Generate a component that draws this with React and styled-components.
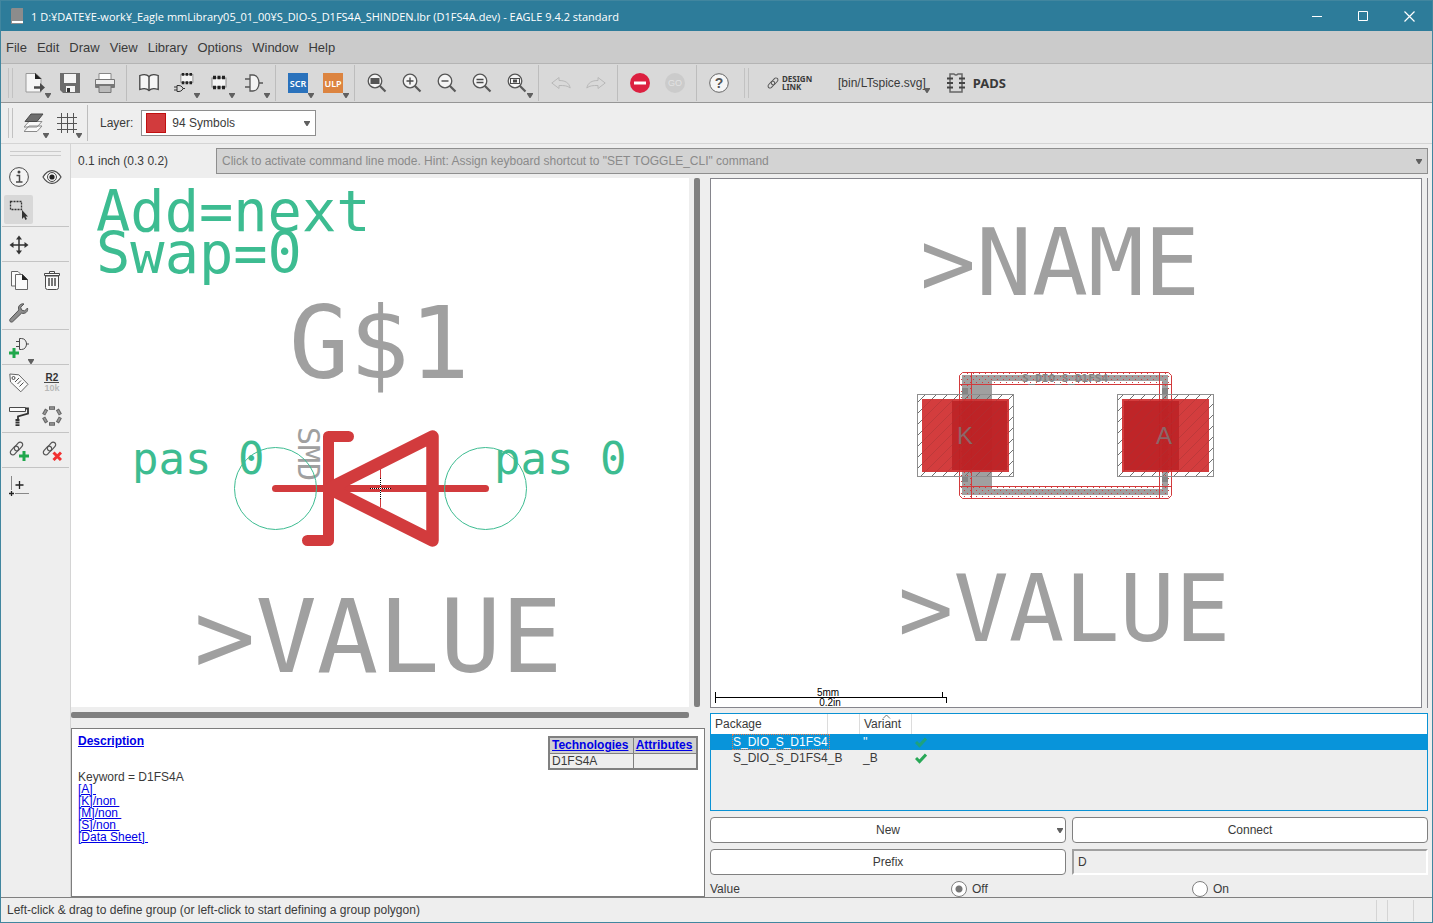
import { useState } from "react";
import styled, { createGlobalStyle } from "styled-components";

const uiFont = `"Liberation Sans", Arial, sans-serif`;
const lineFont = `"DejaVu Sans Mono", monospace`;

const Svg = ({ size = 20, w, children }) => (
  <svg
    width={w || size}
    height={size}
    viewBox={`0 0 ${w || size} ${size}`}
    fill="none"
    stroke="#4a4a4a"
    aria-hidden="true"
  >
    {children}
  </svg>
);

const Arrow = () => (
  <svg width="6" height="5" viewBox="0 0 6 5" aria-hidden="true">
    <path d="M0 0h6v1L3.500 5h-1L0 1z" fill="#606060" />
  </svg>
);

const Lens = ({ children }) => (
  <Svg>
    <path d="M12.5 12.5 18.500 18.500" stroke="#5a5a5a" strokeWidth="2.2" />
    <circle cx="8" cy="8" r="6.800" fill="#f4f4f4" stroke="#555" strokeWidth="1.300" />
    {children}
  </Svg>
);

const Chip = ({ x = 0, y = 0, s = 1 }) => (
  <g transform={`translate(${x} ${y}) scale(${s})`}>
    <rect x="1" y="3" width="14" height="9" fill="#f4f4f4" stroke="#888" />
    <path
      d="M2 2.500h3M6.500 2.500h3M11 2.500h3M2 12.500h3M6.500 12.500h3M11 12.500h3"
      stroke="#222"
      strokeWidth="3.500"
    />
  </g>
);

const Chain = () => (
  <g stroke="#555" strokeWidth="1.200">
    <rect x="-5" y="-2.500" width="10" height="5" rx="2.500" transform="translate(5.500 9.500) rotate(-48)" />
    <rect x="-5" y="-2.500" width="10" height="5" rx="2.500" transform="translate(9.500 5.500) rotate(-48)" />
  </g>
);

const icons = {
  open: (
    <Svg>
      <path d="M1 .5h10l5 5v13.500H1z" fill="#f6f6f6" stroke="#999" />
      <path d="M10 0v6h6.500z" fill="#222" stroke="none" />
      <path d="M9 14.500h8" strokeWidth="2.500" />
      <path d="M15 10v9l5-4.500z" fill="#4a4a4a" stroke="none" />
    </Svg>
  ),
  save: (
    <Svg>
      <path d="M0 0h20v20H3l-3-3z" fill="#6c6c6c" stroke="none" />
      <path d="M4 1h12v9H4zM6 13h9v6H6z" fill="#f4f4f4" stroke="none" />
      <path d="M7 15h3v4H7z" fill="#333" stroke="none" />
    </Svg>
  ),
  print: (
    <Svg>
      <path d="M4 .5h12v7H4z" fill="#fff" stroke="#888" />
      <path d="M.5 6.500h19v8H.5z" fill="#ececec" stroke="#777" />
      <path d="M1 11h18v4H1z" fill="#777" stroke="none" />
      <path d="M4 12.500h12v7H4z" fill="#bbb" stroke="#777" />
    </Svg>
  ),
  book: (
    <Svg>
      <path
        d="M10 3.500C8 1.500 4 1.500 .8 2.500v14c3.200-1 7.200-1 9.200 1 2-2 6-2 9.200-1v-14C16 1.500 12 1.500 10 3.500z"
        fill="#f6f6f6"
        stroke="#444"
        strokeWidth="1.300"
      />
      <path d="M10 3.500v14" strokeWidth="1.500" />
    </Svg>
  ),
  device: (
    <Svg>
      <Chip x={6} y={-1} s={0.86} />
      <path d="M3 12.500h2c3 0 4 3 4 3s-1 3-4 3H3zM0 14h3M0 17h3M9 15.500h2" stroke="#333" />
    </Svg>
  ),
  package: (
    <Svg>
      <Chip x={2} y={2} />
    </Svg>
  ),
  gate: (
    <Svg>
      <path d="M6 2h3c4 0 6 4 6 8s-2 8-6 8H6z" fill="#f4f4f4" stroke="#555" strokeWidth="1.300" />
      <path d="M1 6h5M1 14h5M15 10h4" stroke="#555" strokeWidth="1.500" />
    </Svg>
  ),
  fit: (
    <Lens>
      <rect x="3.500" y="5" width="9" height="6" fill="#555" stroke="none" />
    </Lens>
  ),
  zoomIn: (
    <Lens>
      <path d="M4.500 8h7M8 4.500v7" strokeWidth="1.400" />
    </Lens>
  ),
  zoomOut: (
    <Lens>
      <path d="M4.500 8h7" strokeWidth="1.400" />
    </Lens>
  ),
  redraw: (
    <Lens>
      <path d="M4.500 6.500h7M4.500 9.500h7" strokeWidth="1.400" />
    </Lens>
  ),
  select: (
    <Lens>
      <rect x="3.500" y="5.500" width="9" height="5" />
      <path d="M6 8h4" strokeWidth="3" />
    </Lens>
  ),
  undo: (
    <Svg>
      <path d="M.8 10 8 4.500v3c6 0 10 2 11.200 7.500-3-2.500-6-2.500-11.200-2.500v3z" stroke="#b8b8b8" />
    </Svg>
  ),
  redo: (
    <Svg>
      <path d="M19.200 10 12 4.500v3C6 7.500 2 9.500.8 15c3-2.500 6-2.500 11.200-2.500v3z" stroke="#b8b8b8" />
    </Svg>
  ),
  stop: (
    <Svg>
      <circle cx="10" cy="10" r="10" fill="#dc2040" stroke="none" />
      <path d="M4 10h12" stroke="#fff" strokeWidth="3" />
    </Svg>
  ),
  go: (
    <Svg>
      <circle cx="10" cy="10" r="10" fill="#cbcbcb" stroke="none" />
      <text x="10" y="13" textAnchor="middle" fill="#e2e2e2" stroke="none" fontSize="9">
        GO
      </text>
    </Svg>
  ),
  help: (
    <Svg>
      <circle cx="10" cy="10" r="9.300" fill="#f6f6f6" stroke="#666" />
      <text x="10" y="15" textAnchor="middle" fill="#555" stroke="none" fontSize="14" fontWeight="bold">
        ?
      </text>
    </Svg>
  ),
  layers: (
    <Svg>
      <path d="M0 18.500 5 13h13l-5 5.500zM0 14l5-5.500h13L13 14z" fill="#fafafa" stroke="#8a8a8a" />
      <path d="M1 8.500 7 1h12l-6 7.500z" fill="#6e6e6e" stroke="#4a4a4a" />
    </Svg>
  ),
  grid: (
    <Svg>
      <path d="M4.500 0v20M10.500 0v20M16.500 0v20M0 4.500h20M0 10.500h20M0 16.500h20" stroke="#555" />
    </Svg>
  ),
  info: (
    <Svg>
      <circle cx="10" cy="10" r="9.400" fill="#f4f4f4" />
      <path d="M7.500 8.500h3v6M7 15h6.500" strokeWidth="1.500" />
      <circle cx="10" cy="5" r="1.500" fill="#444" stroke="none" />
    </Svg>
  ),
  eye: (
    <Svg>
      <path d="M1 10c5-8.500 13-8.500 18 0-5 8.500-13 8.500-18 0z" fill="#f6f6f6" strokeWidth="1.200" />
      <circle cx="10" cy="10" r="4.500" />
      <circle cx="10" cy="10" r="2.600" fill="#222" stroke="none" />
    </Svg>
  ),
  group: (
    <Svg>
      <rect x="1.500" y="1.500" width="11" height="8" strokeDasharray="2 1" strokeWidth="1.300" stroke="#333" />
      <path d="M13 10v9l2-2 1.500 3 1.500-1-1.500-2.500H19z" fill="#333" stroke="none" />
    </Svg>
  ),
  move: (
    <Svg>
      <path d="M10 3v14M3 10h14" stroke="#333" strokeWidth="1.500" />
      <path d="m10 .5 3 4H7zM10 19.500l3-4H7zM.5 10l4-3v6zM19.500 10l-4-3v6z" fill="#333" stroke="none" />
    </Svg>
  ),
  copy: (
    <Svg>
      <path d="M2.500 1.500H9l3 3v11.500H2.500z" fill="#fafafa" stroke="#666" />
      <path d="M6.500 4.500h7l5 5v10h-12z" fill="#fafafa" stroke="#666" />
      <path d="M13 4v6h6z" fill="#222" stroke="none" />
    </Svg>
  ),
  trash: (
    <Svg>
      <path d="M3.500 6v11.500q0 2 2 2h9q2 0 2-2V6zM2.500 3.500h15v2h-15zM7.500 3V1.500h5V3" fill="#fafafa" />
      <path d="M7 8v8M10 8v8M13 8v8" strokeWidth="1.500" />
    </Svg>
  ),
  wrench: (
    <Svg>
      <path
        d="M18.500 5 15.500 8l-3-1-.8-2.800L15 1C12.500.3 9.500 2 9.500 5l.3 2L1.200 16c-1.500 2 .6 4 2.500 2.700l8.800-8.500c3.500 1 7-1.500 6-5.200z"
        fill="#8e8e8e"
        stroke="#555"
      />
    </Svg>
  ),
  addGate: (
    <Svg>
      <path d="M10.500 .5h2c3.500 0 5 3 5 5.500s-1.500 5.500-5 5.500h-2zM7 3.500h3.500M7 8.500h3.500M17 6h3" />
      <path d="M5 10v10M0 15h10" stroke="#20a84c" strokeWidth="3" />
    </Svg>
  ),
  tag: (
    <Svg>
      <path d="m.8 1 9 .8 9.200 9.500-7.200 7.500L1.500 9z" fill="#fafafa" stroke="#666" />
      <circle cx="4.500" cy="5" r="1.500" />
      <path d="m6 9 4-4M8.500 11l3.500-3.500M10.500 13.500 14.500 9.500" />
    </Svg>
  ),
  value: (
    <Svg>
      <text x="10" y="8" textAnchor="middle" fill="#333" stroke="none" fontSize="10" fontWeight="bold">
        R2
      </text>
      <path d="M2 9.500h15" />
      <text x="10" y="18" textAnchor="middle" fill="#b8b8b8" stroke="none" fontSize="9" fontWeight="bold">
        10k
      </text>
    </Svg>
  ),
  paint: (
    <Svg>
      <path d="M.5 1.500h16v4H.5z" fill="#fafafa" />
      <path d="M16.500 2.500h2.500v5l-10 3v3" stroke="#333" strokeWidth="1.800" />
      <path d="M8.500 13v7" stroke="#333" strokeWidth="4" strokeDasharray="2 .6" />
    </Svg>
  ),
  array: (
    <Svg>
      {[0, 60, 120, 180, 240, 300].map((a) => (
        <rect
          key={a}
          x="7.500"
          y=".8"
          width="5"
          height="2.500"
          fill="#999"
          stroke="#666"
          transform={`rotate(${a} 10 10)`}
        />
      ))}
    </Svg>
  ),
  linkAdd: (
    <Svg>
      <Chain />
      <path d="M15 10v10M10 15h10" stroke="#20a84c" strokeWidth="3" />
    </Svg>
  ),
  linkRemove: (
    <Svg>
      <Chain />
      <path d="m11.500 11.500 7.500 7.500M19 11.500 11.500 19" stroke="#f23030" strokeWidth="3" />
    </Svg>
  ),
  mark: (
    <Svg>
      <path d="M2.500 0v14M6 17.500h14" stroke="#888" />
      <path d="M10.500 5v8M6.500 9h8M2.500 15v5M0 17.500h5" stroke="#222" strokeWidth="1.300" />
    </Svg>
  ),
  check: (
    <Svg size={12}>
      <path d="m1 6 3.500 3.500L11 2.500" stroke="#28a857" strokeWidth="3" />
    </Svg>
  ),
};

const script = (text, fill) => (
  <Svg>
    <rect width="20" height="20" fill={fill} stroke="none" />
    <text
      x="10"
      y="14"
      textAnchor="middle"
      fill="#fff"
      stroke="none"
      fontFamily="Noto Sans"
      fontSize="9"
      fontWeight="600"
    >
      {text}
    </text>
  </Svg>
);

const mainTools = [
  [
    { label: "Open", icon: icons.open, menu: true },
    { label: "Save", icon: icons.save },
    { label: "Print", icon: icons.print },
  ],
  [
    { label: "Table of contents", icon: icons.book },
    { label: "Device", icon: icons.device, menu: true },
    { label: "Footprint", icon: icons.package, menu: true },
    { label: "Symbol", icon: icons.gate, menu: true },
  ],
  [
    { label: "Run script", icon: script("SCR", "#2a72bc"), menu: true },
    { label: "Run ULP", icon: script("ULP", "#dc8440"), menu: true },
  ],
  [
    { label: "Zoom to fit", icon: icons.fit },
    { label: "Zoom in", icon: icons.zoomIn },
    { label: "Zoom out", icon: icons.zoomOut },
    { label: "Redraw", icon: icons.redraw },
    { label: "Zoom select", icon: icons.select, menu: true },
  ],
  [
    { label: "Undo", icon: icons.undo },
    { label: "Redo", icon: icons.redo },
  ],
  [
    { label: "Stop", icon: icons.stop },
    { label: "Go", icon: icons.go },
  ],
  [{ label: "Help", icon: icons.help }],
];

const sideTools = [
  [
    { label: "Info", icon: icons.info },
    { label: "Show", icon: icons.eye },
    { label: "Group", icon: icons.group, active: true },
  ],
  [{ label: "Move", icon: icons.move }],
  [
    { label: "Copy", icon: icons.copy },
    { label: "Delete", icon: icons.trash },
    { label: "Change", icon: icons.wrench },
  ],
  [{ label: "Add", icon: icons.addGate, menu: true }],
  [
    { label: "Name", icon: icons.tag },
    { label: "Value", icon: icons.value },
    { label: "Paint", icon: icons.paint },
    { label: "Array", icon: icons.array },
  ],
  [
    { label: "Add link", icon: icons.linkAdd },
    { label: "Remove link", icon: icons.linkRemove },
  ],
  [{ label: "Mark", icon: icons.mark }],
];

const menus = ["File", "Edit", "Draw", "View", "Library", "Options", "Window", "Help"];

const packages = [
  { name: "S_DIO_S_D1FS4", variant: "''" },
  { name: "S_DIO_S_D1FS4_B", variant: "_B" },
];

const links = ["[A]\u00a0", "[K]/non\u00a0", "[M]/non\u00a0", "[S]/non\u00a0", "[Data Sheet]\u00a0"];

const Symbol = () => (
  <Drawing viewBox="71 178 618 529">
    <g fill="#3dbc91">
      <text x="96" y="231" fontSize="57">Add=next</text>
      <text x="96" y="273" fontSize="57">Swap=0</text>
      <text x="132" y="474" fontSize="44">pas 0</text>
      <text x="494" y="474" fontSize="44">pas 0</text>
    </g>
    <g fill="#a0a0a0">
      <text x="289" y="378" fontSize="100">G$1</text>
      <text x="194" y="672" fontSize="102">&gt;VALUE</text>
      <text transform="translate(298 427) rotate(90)" fontSize="30">SMD</text>
    </g>
    <g fill="none" stroke="#d23b3d" strokeLinecap="round" strokeLinejoin="round">
      <path d="M275.500 488.500H485.500" strokeWidth="7" />
      <path d="M348.500 436.500H328.500V540.500H307.500" strokeWidth="11" />
      <path d="M329 488.500 432.500 436.500V540.500z" strokeWidth="12.500" />
      <path d="M380.500 469V507" strokeWidth="1" />
    </g>
    <g fill="none" stroke="#3dbc91">
      <circle cx="275.500" cy="488.500" r="41" />
      <circle cx="485.500" cy="488.500" r="41" />
    </g>
    <path d="M370 488.500h21M380.500 478v21" stroke="#fff" />
    <path d="M370 488.500h21M380.500 478v21" stroke="#000" strokeDasharray="1 1" />
  </Drawing>
);

const Pad = ({ x, inner, name }) => (
  <g>
    <rect x={x + 0.5} y="394.500" width="96" height="82" fill="url(#hatch)" stroke="#8f8f8f" />
    <rect x={x + 5} y="399" width="87" height="73" fill="#cf2c2e" fillOpacity=".92" />
    <rect x={inner} y="401" width="55" height="69" fill="#b81e22" fillOpacity=".75" />
    <rect x={x + 5} y="399" width="87" height="73" fill="url(#hatch)" opacity=".12" />
    <text
      x={name === "K" ? 965 : 1164}
      y="444"
      textAnchor="middle"
      fontFamily="Liberation Sans"
      fontSize="24"
      fill="#8c6668"
    >
      {name}
    </text>
  </g>
);

const Footprint = () => (
  <Drawing viewBox="711 179 710 528">
    <defs>
      <pattern id="hatch" width="11" height="11" patternUnits="userSpaceOnUse">
        <path d="M-1 12 12-1" stroke="#707070" />
      </pattern>
      <pattern id="dots" width="6" height="6" patternUnits="userSpaceOnUse">
        <path d="M1 1h1v1H1zM4 4h1v1H4z" fill="#d23b3d" />
      </pattern>
    </defs>
    <g fill="#a0a0a0">
      <text x="920" y="295" fontSize="93">&gt;NAME</text>
      <text x="898" y="641" fontSize="92">&gt;VALUE</text>
    </g>
    <path
      d="M962 375h206v120H962zM992 381v108h170V381z"
      fill="#a0a0a0"
      fillRule="evenodd"
    />
    <path
      d="M963 372h205l4 4v118l-4 4H963l-4-4V376zM972 385v101h187V385z"
      fill="url(#dots)"
      fillRule="evenodd"
    />
    <path
      d="M962.500 372.500h206l3 3v120l-3 3h-206l-3-3v-120zM959.500 384.500h212M959.500 486.500h212M971.500 372.500v126M1159.500 372.500v126"
      fill="none"
      stroke="#d23b3d"
    />
    <path d="M962 388h6v6h-6zM962 476h6v6h-6zM1162 388h6v6h-6zM1162 476h6v6h-6z" fill="#858585" />
    <text x="1065" y="382" textAnchor="middle" fontSize="11" fontWeight="bold" fill="#858585">
      S_DIO_S_D1FS4
    </text>
    <Pad x={917} inner={952} name="K" />
    <Pad x={1117} inner={1124} name="A" />
    <path d="M715.500 692v11M715 697.500h231M942.500 692v5M946.500 697v6" stroke="#000" />
    <g fontSize="10" textAnchor="middle" fontFamily="Liberation Sans">
      <text x="828" y="696">5mm</text>
      <text x="830" y="706">0.2in</text>
    </g>
  </Drawing>
);

const Tool = ({ tool }) => (
  <ToolButton type="button" aria-label={tool.label} $active={tool.active}>
    {tool.icon}
    {tool.menu && (
      <Corner>
        <Arrow />
      </Corner>
    )}
  </ToolButton>
);

const App = () => {
  const [valueOn, setValueOn] = useState(false);
  const [prefix, setPrefix] = useState("D");

  return (
    <Window>
      <GlobalStyle />
      <TitleBar>
        <svg width="12" height="16" viewBox="0 0 12 16" aria-hidden="true">
          <path d="M1 0h11v16H0V1z" fill="#8c8c8c" />
          <path d="M1 13h11v2H1z" fill="#fff" />
        </svg>
        <Title>
          1 D:¥DATE¥E-work¥_Eagle mmLibrary05_01_00¥S_DIO-S_D1FS4A_SHINDEN.lbr (D1FS4A.dev) - EAGLE 9.4.2 standard
        </Title>
        <WindowButton type="button" aria-label="Minimize">
          <Svg size={11}>
            <path d="M0 5.500h10" stroke="#fff" />
          </Svg>
        </WindowButton>
        <WindowButton type="button" aria-label="Maximize">
          <Svg size={11}>
            <path d="M.5 .5h9v9h-9z" stroke="#fff" />
          </Svg>
        </WindowButton>
        <WindowButton type="button" aria-label="Close">
          <Svg size={11}>
            <path d="m.5.5 10 10M10.500.5l-10 10" stroke="#fff" strokeWidth="1.200" />
          </Svg>
        </WindowButton>
      </TitleBar>

      <MenuBar>
        {menus.map((menu) => (
          <MenuButton type="button" key={menu}>
            {menu}
          </MenuButton>
        ))}
      </MenuBar>

      <MainBar>
        <Handle />
        {mainTools.map((group, i) => (
          <ToolGroup key={i}>
            {group.map((tool) => (
              <Tool key={tool.label} tool={tool} />
            ))}
          </ToolGroup>
        ))}
        <VendorHandle />
        <Vendors>
          <VendorButton type="button">
            <Svg size={12}>
              <g transform="scale(.8)">
                <Chain />
              </g>
            </Svg>
            <DesignLink>
              DESIGN
              <br />
              LINK
            </DesignLink>
          </VendorButton>
          <VendorButton type="button">
            [bin/LTspice.svg]
            <VendorArrow>
              <Arrow />
            </VendorArrow>
          </VendorButton>
          <VendorButton type="button">
            <Svg>
              <path d="M4 1h4q2 2 4 0h4v18H4z" stroke="#666" strokeWidth="1.500" />
              <path d="M1 5.500h6M1 10h6M1 14.500h6M13 5.500h6M13 10h6M13 14.500h6" stroke="#444" strokeWidth="2" />
            </Svg>
            <Pads>PADS</Pads>
          </VendorButton>
        </Vendors>
      </MainBar>

      <LayerBar>
        <Handle />
        <ToolGroup>
          <Tool tool={{ label: "Layer settings", icon: icons.layers, menu: true }} />
          <Tool tool={{ label: "Grid", icon: icons.grid, menu: true }} />
        </ToolGroup>
        <LayerLabel htmlFor="layer">Layer:</LayerLabel>
        <LayerField>
          <Swatch />
          <Select id="layer">
            <option>94 Symbols</option>
          </Select>
          <Arrow />
        </LayerField>
      </LayerBar>

      <Body>
        <SideBar>
          <SideHandle />
          {sideTools.map((group, i) => (
            <SideGroup key={i}>
              {group.map((tool) => (
                <Tool key={tool.label} tool={tool} />
              ))}
            </SideGroup>
          ))}
        </SideBar>

        <Main>
          <CommandRow>
            <Coordinates>0.1 inch (0.3 0.2)</Coordinates>
            <CommandField>
              <Select aria-label="Command line">
                <option>
                  Click to activate command line mode. Hint: Assign keyboard shortcut to "SET TOGGLE_CLI" command
                </option>
              </Select>
              <Arrow />
            </CommandField>
          </CommandRow>

          <Editors>
            <Column>
              <SymbolPane>
                <SymbolCanvas>
                  <Symbol />
                </SymbolCanvas>
                <ScrollBar />
              </SymbolPane>
              <BottomScroll />
              <Description>
                <div>
                  <Heading href="#description">Description</Heading>
                  <Keyword>Keyword = D1FS4A</Keyword>
                  {links.map((link) => (
                    <DocLink key={link} href="#doc">
                      {link}
                    </DocLink>
                  ))}
                </div>
                <TechTable>
                  <thead>
                    <tr>
                      <th>
                        <a href="#technologies">Technologies</a>
                      </th>
                      <th>
                        <a href="#attributes">Attributes</a>
                      </th>
                    </tr>
                  </thead>
                  <tbody>
                    <tr>
                      <td>D1FS4A</td>
                      <td />
                    </tr>
                  </tbody>
                </TechTable>
              </Description>
            </Column>

            <Column>
              <PackagePane>
                <PackageCanvas>
                  <Footprint />
                </PackageCanvas>
              </PackagePane>
              <PackageList>
                <PackageTable>
                  <colgroup>
                    <col width="117" />
                    <col width="32" />
                    <col width="52" />
                    <col />
                  </colgroup>
                  <thead>
                    <tr>
                      <th>Package</th>
                      <th />
                      <th>
                        <SortMark>
                          <svg width="9" height="5" viewBox="0 0 9 5" aria-hidden="true">
                            <path d="M1 4.500 4.500 1 8 4.500" fill="none" stroke="#777" />
                          </svg>
                        </SortMark>
                        Variant
                      </th>
                      <th />
                    </tr>
                  </thead>
                  <tbody>
                    {packages.map((item, i) => (
                      <PackageRow key={item.name} $selected={i === 0}>
                        <td colSpan="2">
                          <PackageName $selected={i === 0}>{item.name}</PackageName>
                        </td>
                        <td>{item.variant}</td>
                        <CheckCell $selected={i === 0}>{icons.check}</CheckCell>
                      </PackageRow>
                    ))}
                  </tbody>
                </PackageTable>
              </PackageList>
              <Form>
                <Button type="button">
                  New
                  <ButtonArrow>
                    <Arrow />
                  </ButtonArrow>
                </Button>
                <Button type="button">Connect</Button>
                <Button type="button">Prefix</Button>
                <PrefixInput
                  aria-label="Prefix"
                  value={prefix}
                  onChange={(e) => setPrefix(e.target.value)}
                />
              </Form>
              <ValueRow>
                <span>Value</span>
                <RadioLabel>
                  <Radio type="radio" name="value" checked={!valueOn} onChange={() => setValueOn(false)} />
                  Off
                </RadioLabel>
                <RadioLabel>
                  <Radio type="radio" name="value" checked={valueOn} onChange={() => setValueOn(true)} />
                  On
                </RadioLabel>
              </ValueRow>
            </Column>
          </Editors>
        </Main>
      </Body>

      <StatusBar>
        <StatusText>
          Left-click &amp; drag to define group (or left-click to start defining a group polygon)
        </StatusText>
        <StatusCell $width={11} />
        <StatusCell $width={26} />
        <StatusCell $width={19} />
      </StatusBar>
    </Window>
  );
};

export default App;

// Styled Components
const GlobalStyle = createGlobalStyle`
  * {
    box-sizing: border-box;
  }

  body {
    margin: 0;
    background: #eeeeee;
    color: #3a3a3a;
    font-family: ${uiFont};
    font-size: 12px;
  }

  button, input, select {
    font: inherit;
    color: inherit;
    padding: 0;
    border: 0;
    background: none;
  }

  svg {
    display: block;
    flex: none;
  }
`;

const Window = styled.div`
  display: flex;
  flex-direction: column;
  min-height: 100vh;
  border: 1px solid #41869f;
`;

const TitleBar = styled.header`
  display: flex;
  align-items: center;
  height: 30px;
  padding-left: 10px;
  background: #2d7c9a;
  color: #fff;
`;

const Title = styled.div`
  flex: 1;
  margin-left: 8px;
  font-family: "Open Sans", sans-serif;
  font-size: 11px;
  white-space: nowrap;
  overflow: hidden;
`;

const WindowButton = styled.button`
  display: flex;
  align-items: center;
  justify-content: center;
  width: 46px;
  height: 30px;
`;

const MenuBar = styled.nav`
  display: flex;
  align-items: center;
  gap: 10px;
  height: 33px;
  padding-left: 5px;
  background: #cbcbcb;
  border-bottom: 1px solid #b4b4b4;
`;

const MenuButton = styled.button`
  font-size: 13px;
`;

const ToolGroup = styled.div`
  display: flex;
  align-items: center;
  height: 36px;
  padding: 0 4px;
  border-right: 1px solid #bdbdbd;
`;

const ToolButton = styled.button`
  position: relative;
  display: flex;
  align-items: center;
  justify-content: center;
  width: 35px;
  height: 33px;
  border-radius: 2px;
  background: ${(props) => (props.$active ? "#d8d8d8" : "none")};
`;

const Corner = styled.span`
  position: absolute;
  right: 1px;
  bottom: 2px;
`;

const ToolBar = styled.div`
  display: flex;
  align-items: center;
`;

const MainBar = styled(ToolBar)`
  height: 39px;
  padding-left: 7px;
  background: #d9d9d9;
  border-bottom: 1px solid #969696;

  ${ToolGroup}:nth-last-child(3) {
    border-right: 0;
    margin-right: 4px;
  }
`;

const LayerBar = styled(ToolBar)`
  height: 41px;
  padding-left: 7px;
  border-bottom: 1px solid #d4d4d4;

  ${ToolButton} {
    width: 33px;
  }
`;

const Handle = styled.div`
  width: 5px;
  height: 30px;
  border: solid #c2c2c2;
  border-width: 0 1px;
`;

const VendorHandle = styled(Handle)`
  margin-right: 18px;
`;

const Vendors = styled.div`
  display: flex;
  align-items: center;
  gap: 20px;
`;

const VendorButton = styled.button`
  position: relative;
  display: flex;
  align-items: center;
  gap: 3px;
  height: 24px;
`;

const VendorArrow = styled(Corner)`
  right: -4px;
`;

const DesignLink = styled.span`
  width: 36px;
  font-family: "Noto Sans", sans-serif;
  font-size: 8px;
  font-weight: 700;
  line-height: 8px;
  text-align: left;
`;

const Pads = styled.span`
  margin-left: 4px;
  font-family: "Noto Sans", sans-serif;
  font-size: 13px;
  font-weight: 700;
`;

const LayerLabel = styled.label`
  margin: 0 8px 0 12px;
`;

const Field = styled.div`
  display: flex;
  align-items: center;
  height: 26px;
  padding-right: 5px;
  border: 1px solid #8e8e8e;
`;

const LayerField = styled(Field)`
  width: 175px;
  padding-left: 4px;
  gap: 6px;
  background: #fff;
`;

const CommandField = styled(Field)`
  flex: 1;
  padding-left: 5px;
  background: #d3d3d3;
  color: #8a8a8a;
`;

const Select = styled.select`
  flex: 1;
  min-width: 0;
  height: 24px;
  appearance: none;
`;

const Swatch = styled.span`
  width: 20px;
  height: 20px;
  background: #d23b3d;
  border: 1px solid #c01010;
`;

const Body = styled.div`
  flex: 1;
  display: flex;
`;

const SideBar = styled.aside`
  width: 70px;
  padding: 7px 1px 0;
  border-right: 1px solid #d4d4d4;
`;

const SideHandle = styled.div`
  height: 5px;
  margin: 0 8px 4px;
  border: solid #cbcbcb;
  border-width: 1px 0;
`;

const SideGroup = styled.div`
  display: grid;
  grid-template-columns: 33px 33px;
  margin-bottom: 1px;
  border-bottom: 1px solid #c4c4c4;

  &:last-child {
    border-bottom: 0;
  }

  ${ToolButton} {
    width: 29px;
    height: 29px;
    margin: 2px;
  }

  ${Corner} {
    right: -1px;
    bottom: -2px;
  }
`;

const Main = styled.main`
  flex: 1;
  display: flex;
  flex-direction: column;
  min-width: 0;
  padding-right: 4px;
`;

const CommandRow = styled.div`
  display: flex;
  align-items: center;
  height: 34px;
`;

const Coordinates = styled.div`
  width: 145px;
  padding-left: 7px;
`;

const Editors = styled.div`
  flex: 1;
  display: grid;
  grid-template-columns: minmax(0, 634fr) minmax(0, 718fr);
  gap: 5px;
`;

const Column = styled.section`
  display: flex;
  flex-direction: column;
`;

const Drawing = styled.svg`
  width: 100%;
  height: 100%;
  position: absolute;
  inset: 0;
  font-family: ${lineFont};
`;

const SymbolPane = styled.div`
  flex: 1;
  display: flex;
  min-height: 360px;
  gap: 5px;
`;

const SymbolCanvas = styled.div`
  position: relative;
  flex: 1;
  background: #fff;
`;

const ScrollBar = styled.div`
  width: 6px;
  margin-right: 5px;
  border-radius: 2px;
  background: #808080;
`;

const BottomScroll = styled.div`
  height: 6px;
  margin: 5px 16px 10px 0;
  border-radius: 2px;
  background: #808080;
`;

const Description = styled.div`
  display: flex;
  justify-content: space-between;
  align-items: flex-start;
  height: 169px;
  padding: 6px;
  background: #fff;
  border: 1px solid #7c7c7c;
  line-height: 12px;
`;

const Heading = styled.a`
  display: block;
  color: #0000e6;
  font-weight: 700;
`;

const Keyword = styled.p`
  margin: 24px 0 0;
`;

const DocLink = styled.a`
  display: block;
  width: max-content;
  color: #0000e6;
`;

const TechTable = styled.table`
  width: 150px;
  margin-top: 1px;
  border: 2px solid #808080;
  border-collapse: collapse;

  th, td {
    height: 16px;
    padding: 1px 2px;
    border: 1px solid #808080;
    text-align: left;
    background: #eeeeee;
  }

  th {
    background: #d0d0d0;
  }

  a {
    color: #0000e6;
  }
`;

const PackagePane = styled.div`
  flex: 1;
  display: flex;
  min-height: 360px;
  padding-right: 5px;
  border-right: 1px solid #85858c;
`;

const PackageCanvas = styled.div`
  position: relative;
  flex: 1;
  background: #fff;
  border: 1px solid #85858c;
`;

const PackageList = styled.div`
  height: 98px;
  margin-top: 5px;
  border: 1px solid #0a92d4;
`;

const PackageTable = styled.table`
  width: 100%;
  table-layout: fixed;
  border-spacing: 0;

  th {
    position: relative;
    height: 20px;
    padding: 0 4px;
    background: #fff;
    border-right: 1px solid #dcdcdc;
    font-weight: 400;
    text-align: left;
  }

  th:last-child {
    border-right: 0;
  }

  td {
    height: 16px;
    padding: 0 3px;
    line-height: 14px;
  }
`;

const SortMark = styled.span`
  position: absolute;
  top: 0;
  left: 22px;
`;

const PackageRow = styled.tr`
  background: ${(props) => (props.$selected ? "#0894da" : "none")};
  color: ${(props) => (props.$selected ? "#fff" : "inherit")};
`;

const PackageName = styled.span`
  display: block;
  width: 98px;
  margin-left: 18px;
  border: 1px dotted ${(props) => (props.$selected ? "#e07850" : "transparent")};
  white-space: nowrap;
`;

const CheckCell = styled.td`
  svg {
    opacity: ${(props) => (props.$selected ? 0.7 : 1)};
  }
`;

const Form = styled.div`
  display: grid;
  grid-template-columns: 1fr 1fr;
  gap: 6px;
  margin-top: 6px;
`;

const Button = styled.button`
  position: relative;
  height: 26px;
  background: #fff;
  border: 1px solid #808080;
  border-radius: 4px;
`;

const ButtonArrow = styled.span`
  position: absolute;
  right: 2px;
  top: 10px;
`;

const PrefixInput = styled.input`
  height: 26px;
  min-width: 0;
  padding: 0 4px;
  border: 2px solid #fff;
  border-top-color: #a0a0a0;
  border-left-color: #a0a0a0;
`;

const ValueRow = styled.div`
  display: grid;
  grid-template-columns: repeat(3, 1fr);
  gap: 5px;
  align-items: center;
  height: 17px;
  margin-top: 5px;
`;

const RadioLabel = styled.label`
  display: flex;
  align-items: center;
  gap: 5px;
`;

const Radio = styled.input`
  appearance: none;
  width: 16px;
  height: 16px;
  margin: 0;
  border: 1px solid #808080;
  border-radius: 50%;
  background: #fff;

  &:checked {
    background: radial-gradient(#777 0 3px, #fff 4px);
  }
`;

const StatusBar = styled.footer`
  display: flex;
  align-items: center;
  height: 25px;
  padding-left: 6px;
  border-top: 1px solid #808080;
`;

const StatusText = styled.div`
  flex: 1;
`;

const StatusCell = styled.div`
  width: ${(props) => props.$width}px;
  height: 21px;
  border-left: 1px solid #d4d4d4;
`;
